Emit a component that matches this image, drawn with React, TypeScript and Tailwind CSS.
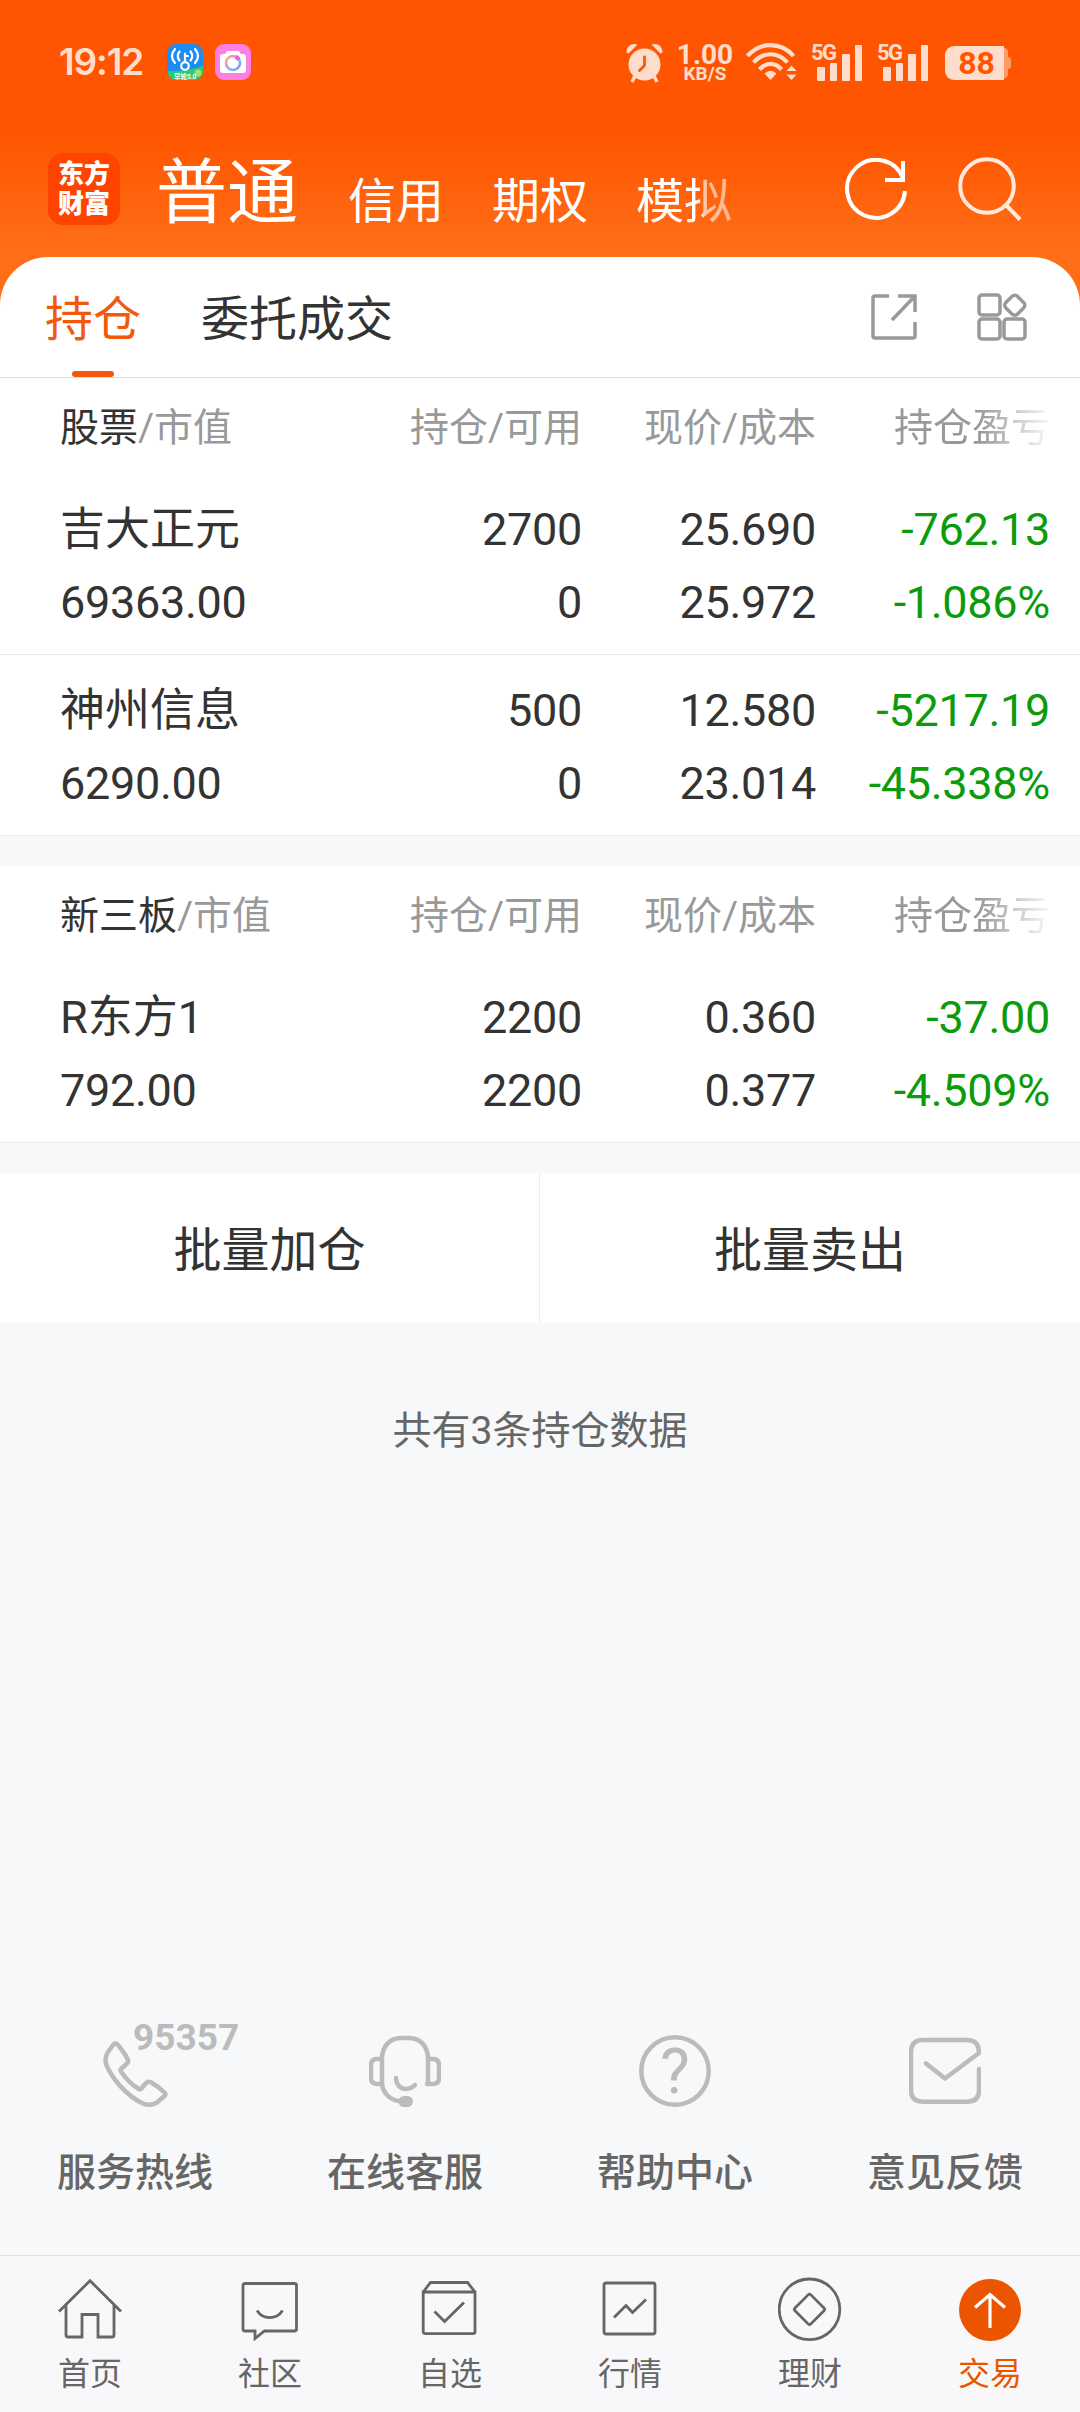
import React from 'react';

interface Holding {
  name: string;
  marketValue: string;
  amount: string;
  available: string;
  price: string;
  cost: string;
  profit: string;
  profitRate: string;
}

interface HoldingTableProps {
  title: string;
  holdings: Holding[];
}

const stocks: Holding[] = [
  {
    name: '吉大正元',
    marketValue: '69363.00',
    amount: '2700',
    available: '0',
    price: '25.690',
    cost: '25.972',
    profit: '-762.13',
    profitRate: '-1.086%',
  },
  {
    name: '神州信息',
    marketValue: '6290.00',
    amount: '500',
    available: '0',
    price: '12.580',
    cost: '23.014',
    profit: '-5217.19',
    profitRate: '-45.338%',
  },
];

const neeq: Holding[] = [
  {
    name: 'R东方1',
    marketValue: '792.00',
    amount: '2200',
    available: '2200',
    price: '0.360',
    cost: '0.377',
    profit: '-37.00',
    profitRate: '-4.509%',
  },
];

const AlarmIcon = () => (
  <svg width="37" height="40" viewBox="0 0 37 40" fill="#ffddcc">
    <circle cx="18.5" cy="21.5" r="16" />
    <path d="M0.500 9.500C0.500 3 6 -0.500 11.500 1.500L2.500 10.500ZM36.500 9.500C36.500 3 31 -0.500 25.500 1.500L34.500 10.500Z" />
    <path d="M9 33l-3 6M28 33l3 6" stroke="#ffddcc" strokeWidth="3.5" />
    <path d="M18.500 14v8.500l-5 5" fill="none" stroke="#ff5500" strokeWidth="2.800" strokeLinecap="round" />
  </svg>
);

const WifiIcon = () => (
  <svg width="51" height="38" viewBox="0 0 51 38" fill="none" stroke="#ffddcc" strokeWidth="4.2">
    <path d="M1.500 13C14 -1.500 35 -1.500 47.500 13" />
    <path d="M7.500 19.500C17 8.500 32 8.500 41.500 19.500" />
    <path d="M13.500 26.500C20 19 29 19 35.500 26.500" />
    <path d="M18.500 30.500Q24.500 25 30.500 30.500L24.500 37Z" fill="#ffddcc" stroke="none" />
    <path d="M40.500 28L45.500 22.500L50.500 28ZM40.500 31.500L45.500 37L50.500 31.500Z" fill="#ffddcc" stroke="none" />
  </svg>
);

const Signal = () => (
  <div className="relative h-[38px] w-[51px]">
    <span className="absolute top-0 left-0 font-['Roboto'] text-[22px] leading-[19px] font-bold tracking-[-1.5px]">5G</span>
    <div className="flex h-full items-end justify-between pl-[6px]">
      <div className="h-[14px] w-[7.5px] rounded-[1px] bg-[#ffddcc]" />
      <div className="h-[18px] w-[7.5px] rounded-[1px] bg-[#ffddcc]" />
      <div className="h-[27px] w-[7.5px] rounded-[1px] bg-[#ffddcc]" />
      <div className="h-[36px] w-[7.5px] rounded-[1px] bg-[#ffddcc]" />
    </div>
  </div>
);

const KeyAppIcon = () => (
  <svg width="36" height="36" viewBox="0 0 36 36" className="rounded-[9px]">
    <rect width="36" height="36" fill="#1c8cf5" />
    <path d="M0 27Q18 28 36 22V36H0Z" fill="#27cf70" />
    <circle cx="31" cy="29" r="3.500" fill="#a5e36a" />
    <g fill="none" stroke="#fff" strokeWidth="2.200" strokeLinecap="round">
      <path d="M8 5Q2 12 8 19M12.500 7.500Q9 12 12.500 16.500M28 5Q34 12 28 19M23.500 7.500Q27 12 23.500 16.500" />
      <circle cx="18" cy="22" r="3.800" />
      <path d="M18 18V9.500M18 12h3" />
    </g>
    <text x="7" y="34.500" fontSize="6.500" fontWeight="700" fill="#fff">
      早轮5.0
    </text>
  </svg>
);

const CameraAppIcon = () => (
  <svg width="36" height="36" viewBox="0 0 36 36">
    <defs>
      <linearGradient id="lens" x1="0" y1="0" x2="1" y2="1">
        <stop offset="0" stopColor="#ffc04d" />
        <stop offset="0.350" stopColor="#e58ad8" />
        <stop offset="0.650" stopColor="#5cc6f2" />
        <stop offset="1" stopColor="#b07af0" />
      </linearGradient>
    </defs>
    <rect width="36" height="36" rx="9" fill="#ff80e5" />
    <path d="M5 13q0-3 3-3h2l2-3h12l2 3h2q3 0 3 3v13q0 3-3 3H8q-3 0-3-3Z" fill="#fff" />
    <circle cx="18" cy="19" r="7" fill="none" stroke="url(#lens)" strokeWidth="2.600" />
    <path d="M22.500 11l3 3-3 3-3-3Z" fill="#f060c8" />
  </svg>
);

const StatusBar = () => (
  <div className="flex h-[124px] items-start pt-[43px] pl-[59px] text-[#ffddcc]">
    <span className="w-[108px] font-['Inter'] text-[37px] leading-[38px] font-semibold tracking-[-1.1px]">19:12</span>
    <div className="flex gap-3 pt-px">
      <KeyAppIcon />
      <CameraAppIcon />
    </div>
    <div className="ml-[375px] flex items-start">
      <AlarmIcon />
      <div className="ml-[14px] flex w-[56px] flex-col items-center font-['Roboto'] font-bold">
        <span className="text-[28px] leading-[23px]">1.00</span>
        <span className="text-[19px] leading-[16px]">KB/S</span>
      </div>
      <div className="ml-[13px]">
        <WifiIcon />
      </div>
      <div className="ml-[14px] flex gap-[15px]">
        <Signal />
        <Signal />
      </div>
      <div className="mt-[3px] ml-[17px] flex items-center">
        <div className="flex h-[34px] w-[59px] items-center justify-center rounded-l-[9px] bg-[#ffddcc] pl-1 font-['Roboto'] text-[32px] leading-none font-bold text-[#ff5500]">
          88
        </div>
        <div className="h-[30px] w-1 rounded-r-md bg-[#ff9966]" />
        <div className="h-3 w-[3px] rounded-r-sm bg-[#ff9966]" />
      </div>
    </div>
  </div>
);

const RefreshIcon = () => (
  <svg width="64" height="64" viewBox="0 0 64 64" fill="none" stroke="#fff" strokeWidth="4">
    <path d="M60 33A29 29 0 1 1 58 20" />
    <path d="M58 3V22H40" />
  </svg>
);

const SearchIcon = () => (
  <svg width="64" height="66" viewBox="0 0 64 66" fill="none" stroke="#ffe8dc" strokeWidth="4">
    <circle cx="29" cy="29" r="26.800" />
    <path d="M48 48L62 62.500" />
  </svg>
);

const Header = () => (
  <div className="flex h-[133px] items-start">
    <div className="mt-[29px] ml-12 flex h-[72px] w-[72px] flex-col items-center justify-center rounded-[15px] bg-[#ff4400] text-[26px] leading-[30px] font-black text-white">
      <span>东方</span>
      <span>财富</span>
    </div>
    <div className="mt-[29px] ml-[36px] text-[71px] leading-[80px] text-white">普通</div>
    <div className="mt-[54px] ml-[50px] flex w-[480px] gap-12 text-[48px] leading-[48px] text-white">
      <span>信用</span>
      <span>期权</span>
      <span className="[mask-image:linear-gradient(to_right,#000_66%,#0009_72%,#0008_100%)]">模拟</span>
    </div>
    <div className="mt-[34px] ml-[17px]">
      <RefreshIcon />
    </div>
    <div className="mt-[33px] ml-[49px]">
      <SearchIcon />
    </div>
  </div>
);

const Tabs = () => (
  <div className="flex h-[121px] items-center border-b border-[#dddddd] pl-[45px] text-[48px] leading-[72px] text-[#333333]">
    <div className="relative flex h-full items-center pt-[5px] text-[#f2590c]">
      持仓
      <span className="absolute bottom-0 left-[27px] h-[6px] w-[42px] rounded-full bg-[#f2590c]" />
    </div>
    <div className="ml-[60px] pt-[5px]">委托成交</div>
    <svg className="ml-[478px]" width="46" height="46" viewBox="0 0 46 46" fill="none" stroke="#999" strokeWidth="3.500">
      <path d="M18 2H4Q2 2 2 4V42Q2 44 4 44H42Q44 44 44 42V28" />
      <path d="M27 2H44V18M44 2L21 26" />
    </svg>
    <svg className="ml-[60px]" width="50" height="48" viewBox="0 0 50 48" fill="none" stroke="#999" strokeWidth="3.500">
      <rect x="2" y="2" width="21" height="20" rx="3" />
      <rect x="2" y="26" width="21" height="20" rx="3" />
      <rect x="27" y="26" width="21" height="20" rx="3" />
      <rect x="29.500" y="4" width="16.500" height="16.500" rx="4" transform="rotate(45 37.750 12.250)" />
    </svg>
  </div>
);

const HoldingTable: React.FC<HoldingTableProps> = ({ title, holdings }) => {
  return (
    <div className="bg-white">
      <div className="grid h-24 grid-cols-[272px_250px_234px_234px] items-center pt-[4px] pl-[60px] text-right text-[39px] leading-[48px] text-[#999999]">
        <div className="text-left">
          <span className="text-[#333333]">{title}</span>/市值
        </div>
        <div>持仓/可用</div>
        <div>现价/成本</div>
        <div>
          <span className="[mask-image:linear-gradient(to_right,#000_55%,#0001_100%)]">持仓盈亏</span>
        </div>
      </div>
      {holdings.map((item) => (
        <div
          key={item.name}
          className="grid h-[181px] grid-cols-[272px_250px_234px_234px] border-b border-[#ebebeb] pt-[19px] pl-[60px] text-right text-[45px] leading-[73px] tracking-[-0.3px] text-[#333333]"
        >
          <div className="text-left">
            <p className="tracking-normal">{item.name}</p>
            <p>{item.marketValue}</p>
          </div>
          <div>
            <p>{item.amount}</p>
            <p>{item.available}</p>
          </div>
          <div>
            <p>{item.price}</p>
            <p>{item.cost}</p>
          </div>
          <div className="text-[#0b9b0b]">
            <p>{item.profit}</p>
            <p>{item.profitRate}</p>
          </div>
        </div>
      ))}
    </div>
  );
};

const services = [
  {
    label: '服务热线',
    badge: '95357',
    icon: (
      <path d="M14 10Q16.500 7 19 10C23 15 27 20 29 25Q29.500 27 28 28.500L22 34Q21 35 22 36.500C27 44 33 50 40 54Q41.500 54.800 42.500 53.500L47 48Q49 46 51.500 47C57 50 62 54 66 58Q67 59.500 65.500 61L58 67.500Q52 71 45 69C27 61 12 42 7 29Q5.500 22 9 17Z" />
    ),
  },
  {
    label: '在线客服',
    icon: (
      <>
        <path d="M13 49V24C13 11 21 3 32 3H40C51 3 59 11 59 24V49" />
        <path d="M13 24H8Q2 24 2 30V43Q2 49 8 49H13C14 58 21 65 30 66" />
        <path d="M59 24H64Q70 24 70 30V43Q70 49 64 49H58" />
        <path d="M27 43C27 50 32 54 37 54Q42 54 46 50" />
        <rect x="29.500" y="61" width="14.500" height="11" rx="5.500" fill="#bbb" stroke="none" />
      </>
    ),
  },
  {
    label: '帮助中心',
    mark: '?',
    icon: <circle cx="36" cy="36" r="33.700" />,
  },
  {
    label: '意见反馈',
    icon: (
      <path d="M70 34V55Q70 66.700 58 66.700H14Q2 66.700 2 55V17Q2 5 14 5H58Q70 5 70 18L36 43.500L17 28.500" />
    ),
  },
];

const navItems = [
  {
    label: '首页',
    icon: <path d="M1 34.500L32 3.700L63 34.500M8 28V58Q8 60 10 60H24V37.500H40V60H54Q56 60 56 58V28" />,
  },
  {
    label: '社区',
    icon: (
      <path d="M7 6.500H56.500Q58.500 6.500 58.500 8.500V52Q58.500 54 56.500 54H26.500L17 61.500V54H7Q5 54 5 52V8.500Q5 6.500 7 6.500ZM19 33.500C25 43 38.500 43 44.500 33.500" />
    ),
  },
  {
    label: '自选',
    icon: <path d="M5.200 15L12.500 5.500H49.500L57 15M5.200 15H57V54.500Q57 56.700 55 56.700H7.200Q5.200 56.700 5.200 54.500ZM16.500 34.500L26.600 44.500L46 25.500" />,
  },
  {
    label: '行情',
    icon: (
      <>
        <rect x="6" y="6" width="51" height="51" rx="2" />
        <path d="M16 40.500L28 28.500L34.500 35.500L48 22.500" />
      </>
    ),
  },
  {
    label: '理财',
    icon: (
      <>
        <circle cx="31.500" cy="32.300" r="30.300" />
        <rect x="20.300" y="21.100" width="22.500" height="22.500" rx="2" transform="rotate(45 31.500 32.300)" />
      </>
    ),
  },
  {
    label: '交易',
    active: true,
    icon: (
      <>
        <circle cx="32" cy="33" r="31" fill="#eb5500" stroke="none" />
        <path d="M32 51V17.500M17 30.500L32 17.500L47 30.500" stroke="#fff" strokeWidth="3.200" />
      </>
    ),
  },
];

const App: React.FC = () => {
  return (
    <div className="flex h-[2412px] w-[1080px] flex-col overflow-hidden bg-[#f7f8fa] font-['Roboto','Noto_Sans_CJK_SC',sans-serif]">
      <div className="bg-[linear-gradient(to_bottom,#ff5500_0px,#ff5500_135px,#ff6d17_245px)]">
        <StatusBar />
        <Header />
        <div className="rounded-t-[48px] bg-white">
          <Tabs />
        </div>
      </div>

      <HoldingTable title="股票" holdings={stocks} />
      <div className="mt-[30px]">
        <HoldingTable title="新三板" holdings={neeq} />
      </div>

      <div className="mt-[30px] grid h-[150px] grid-cols-2 bg-white text-[48px] text-[#333333]">
        <button className="border-r border-[#eeeeee] pt-[5px]">批量加仓</button>
        <button className="pt-[5px]">批量卖出</button>
      </div>

      <p className="mt-[84px] text-center text-[39px] leading-[48px] text-[#666666]">共有3条持仓数据</p>

      <div className="mt-auto grid h-[220px] grid-cols-4">
        {services.map((item) => (
          <div key={item.label} className="relative flex flex-col items-center">
            <svg
              width="72"
              height="72"
              viewBox="0 0 72 72"
              fill="none"
              stroke="#bbb"
              strokeWidth="4.500"
              strokeLinecap="round"
              strokeLinejoin="round"
            >
              {item.icon}
            </svg>
            {item.badge && (
              <span className="absolute top-[-17px] left-[133px] text-[37px] leading-[40px] font-bold text-[#bbbbbb]">
                {item.badge}
              </span>
            )}
            {item.mark && (
              <span className="absolute top-0 text-[63px] leading-[74px] text-[#bbbbbb]">{item.mark}</span>
            )}
            <span className="mt-[42px] text-[39px] leading-[48px] font-medium text-[#666666]">{item.label}</span>
          </div>
        ))}
      </div>

      <div className="grid h-[157px] grid-cols-6 border-t border-[#e0e2e5] bg-[#f8f8fb] pt-[21px]">
        {navItems.map((item) => (
          <div key={item.label} className="flex flex-col items-center">
            <svg width="64" height="64" viewBox="0 0 64 64" fill="none" stroke="#666" strokeWidth="2.800">
              {item.icon}
            </svg>
            <span
              className={
                item.active
                  ? 'mt-[13px] text-[32px] leading-[40px] text-[#eb5500]'
                  : 'mt-[13px] text-[32px] leading-[40px] text-[#666666]'
              }
            >
              {item.label}
            </span>
          </div>
        ))}
      </div>
    </div>
  );
};

export default App;
